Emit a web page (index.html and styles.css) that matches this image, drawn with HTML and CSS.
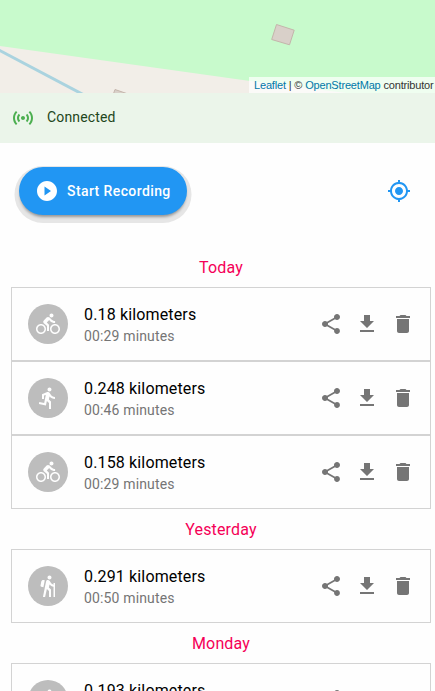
FILE: index.html
```html
<!DOCTYPE html>
<html lang="en">
<head>
<meta charset="utf-8">
<title>Track Recorder</title>
<link rel="stylesheet" href="styles.css">
</head>
<body>
<svg class="sprite" aria-hidden="true">
  <symbol id="bike" viewBox="0 0 24 24"><path d="M15.5 5.5c1.1 0 2-.9 2-2s-.9-2-2-2-2 .9-2 2 .9 2 2 2zM5 12c-2.8 0-5 2.2-5 5s2.2 5 5 5 5-2.2 5-5-2.2-5-5-5zm0 8.5c-1.9 0-3.5-1.6-3.5-3.5s1.6-3.5 3.5-3.5 3.5 1.6 3.5 3.5-1.6 3.5-3.5 3.5zm5.8-10l2.4-2.4.8.8c1.3 1.3 3 2.1 5.1 2.1V9c-1.5 0-2.7-.6-3.6-1.5l-1.9-1.9c-.5-.4-1-.6-1.6-.6s-1.1.2-1.4.6L7.8 8.4c-.4.4-.6.9-.6 1.4 0 .6.2 1.1.6 1.4L11 14v5h2v-6.2l-2.2-2.3zM19 12c-2.8 0-5 2.2-5 5s2.2 5 5 5 5-2.2 5-5-2.2-5-5-5zm0 8.5c-1.9 0-3.5-1.6-3.5-3.5s1.6-3.5 3.5-3.5 3.5 1.6 3.5 3.5-1.6 3.5-3.5 3.5z"/></symbol>
  <symbol id="run" viewBox="0 0 24 24"><path d="M13.49 5.48c1.1 0 2-.9 2-2s-.9-2-2-2-2 .9-2 2 .9 2 2 2zm-3.6 13.9l1-4.4 2.1 2v6h2v-7.5l-2.1-2 .6-3c1.3 1.5 3.3 2.5 5.5 2.5v-2c-1.9 0-3.5-1-4.3-2.4l-1-1.6c-.4-.6-1-1-1.7-1-.3 0-.5.1-.8.1l-5.2 2.2v4.7h2v-3.4l1.8-.7-1.6 8.1-4.9-1-.4 2 7 1.4z"/></symbol>
  <symbol id="hike" viewBox="0 0 24 24"><path d="M13.5 5.5c1.1 0 2-.9 2-2s-.9-2-2-2-2 .9-2 2 .9 2 2 2zM17.5 10.78c-1.23-.37-2.22-1.17-2.8-2.18l-1-1.6c-.41-.65-1.11-1-1.84-1-.78 0-1.59.5-1.78 1.44S7 23 7 23h2.1l1.8-8 2.1 2v6h2v-7.5l-2.1-2 .6-3c1 1.15 2.41 2.01 4 2.34V23H19V9h-1.5v1.78zM7.43 13.13l-2.12-.41c-.54-.11-.9-.63-.79-1.17l.76-3.93c.21-1.08 1.26-1.79 2.34-1.58l1.16.23-1.35 6.86z"/></symbol>
  <symbol id="share" viewBox="0 0 24 24"><path d="M18 16.08c-.76 0-1.44.3-1.96.77L8.91 12.7c.05-.23.09-.46.09-.7s-.04-.47-.09-.7l7.05-4.11c.54.5 1.25.81 2.04.81 1.66 0 3-1.34 3-3s-1.34-3-3-3-3 1.34-3 3c0 .24.04.47.09.7L8.04 9.81C7.5 9.31 6.79 9 6 9c-1.66 0-3 1.34-3 3s1.34 3 3 3c.79 0 1.5-.31 2.04-.81l7.12 4.16c-.05.21-.08.43-.08.65 0 1.61 1.31 2.92 2.92 2.92s2.92-1.31 2.92-2.92-1.31-2.92-2.92-2.92z"/></symbol>
  <symbol id="download" viewBox="0 0 24 24"><path d="M19 9h-4V3H9v6H5l7 7 7-7zM5 18v2h14v-2H5z"/></symbol>
  <symbol id="trash" viewBox="0 0 24 24"><path d="M6 19c0 1.1.9 2 2 2h8c1.1 0 2-.9 2-2V7H6v12zM19 4h-3.5l-1-1h-5l-1 1H5v2h14V4z"/></symbol>
</svg>

<div class="map">
  <svg class="map-tiles" viewBox="0 0 435 93" width="435" height="93">
    <rect width="435" height="93" fill="#f2eee8"/>
    <path d="M0 0H435V104L250 81 0 46z" fill="#c8facc"/>
    <path d="M-4 48.5L84 95" fill="none" stroke="#aad3df" stroke-width="3"/>
    <path d="M276.5 24.5L294.2 30.2 289.5 44.8 271.7 39.5z" fill="#d9d0c9" stroke="#c4b5ab"/>
    <path d="M113 95L115 89.5 131 95z" fill="#d9d0c9" stroke="#c4b5ab"/>
  </svg>
  <div class="attribution"><a>Leaflet</a> | © <a>OpenStreetMap</a> contributor</div>
</div>

<div class="status">
  <svg class="icon" viewBox="0 0 24 24"><path d="M7.76 16.24C6.67 15.16 6 13.66 6 12s.67-3.16 1.76-4.24l1.42 1.42C8.45 9.9 8 10.9 8 12c0 1.1.45 2.1 1.17 2.83l-1.41 1.41zm8.48 0C17.33 15.16 18 13.66 18 12s-.67-3.16-1.76-4.24l-1.42 1.42C15.55 9.9 16 10.9 16 12c0 1.1-.45 2.1-1.17 2.83l1.41 1.41zM12 10c-1.1 0-2 .9-2 2s.9 2 2 2 2-.9 2-2-.9-2-2-2zm8 2c0 2.21-.9 4.21-2.35 5.65l1.42 1.42C20.88 17.26 22 14.76 22 12s-1.12-5.26-2.93-7.07l-1.42 1.42C19.1 7.79 20 9.79 20 12zM6.35 6.35L4.93 4.93C3.12 6.74 2 9.24 2 12s1.12 5.26 2.93 7.07l1.42-1.42C4.9 16.21 4 14.21 4 12s.9-4.21 2.35-5.65z"/></svg>
  <span>Connected</span>
</div>

<div class="controls">
  <button class="record">
    <svg class="icon" viewBox="0 0 24 24"><path d="M12 2C6.48 2 2 6.48 2 12s4.48 10 10 10 10-4.48 10-10S17.52 2 12 2zM9.5 16.500v-9l6.500 4.500-6.500 4.500z"/></svg>
    <span>Start Recording</span>
  </button>
  <svg class="icon locate" viewBox="0 0 24 24"><path d="M12 8c-2.21 0-4 1.79-4 4s1.79 4 4 4 4-1.79 4-4-1.79-4-4-4zm8.94 3c-.46-4.17-3.77-7.48-7.94-7.94V1h-2v2.06C6.83 3.52 3.52 6.83 3.06 11H1v2h2.06c.46 4.17 3.77 7.48 7.94 7.94V23h2v-2.06c4.17-.46 7.48-3.77 7.94-7.94H23v-2h-2.06zM12 19c-3.87 0-7-3.13-7-7s3.13-7 7-7 7 3.13 7 7-3.13 7-7 7z"/></svg>
</div>

<main class="history">
  <h2>Today</h2>
  <article class="track">
    <div class="avatar"><svg class="icon"><use href="#bike"/></svg></div>
    <div class="info"><div class="distance">0.18 kilometers</div><div class="time">00:29 minutes</div></div>
    <div class="actions"><svg class="icon"><use href="#share"/></svg><svg class="icon"><use href="#download"/></svg><svg class="icon"><use href="#trash"/></svg></div>
  </article>
  <article class="track">
    <div class="avatar"><svg class="icon"><use href="#run"/></svg></div>
    <div class="info"><div class="distance">0.248 kilometers</div><div class="time">00:46 minutes</div></div>
    <div class="actions"><svg class="icon"><use href="#share"/></svg><svg class="icon"><use href="#download"/></svg><svg class="icon"><use href="#trash"/></svg></div>
  </article>
  <article class="track">
    <div class="avatar"><svg class="icon"><use href="#bike"/></svg></div>
    <div class="info"><div class="distance">0.158 kilometers</div><div class="time">00:29 minutes</div></div>
    <div class="actions"><svg class="icon"><use href="#share"/></svg><svg class="icon"><use href="#download"/></svg><svg class="icon"><use href="#trash"/></svg></div>
  </article>
  <h2>Yesterday</h2>
  <article class="track">
    <div class="avatar"><svg class="icon"><use href="#hike"/></svg></div>
    <div class="info"><div class="distance">0.291 kilometers</div><div class="time">00:50 minutes</div></div>
    <div class="actions"><svg class="icon"><use href="#share"/></svg><svg class="icon"><use href="#download"/></svg><svg class="icon"><use href="#trash"/></svg></div>
  </article>
  <h2>Monday</h2>
  <article class="track">
    <div class="avatar"><svg class="icon"><use href="#hike"/></svg></div>
    <div class="info"><div class="distance">0.193 kilometers</div></div>
    <div class="actions"><svg class="icon"><use href="#share"/></svg><svg class="icon"><use href="#download"/></svg><svg class="icon"><use href="#trash"/></svg></div>
  </article>
</main>
</body>
</html>
```
FILE: styles.css
```css
* {
  box-sizing: border-box;
}

body {
  margin: 0;
  height: 691px;
  overflow: hidden;
  background: #fefefe;
  color: #000;
  font-family: Roboto, sans-serif;
}

.sprite {
  display: none;
}

.icon {
  display: block;
  flex: none;
  width: 24px;
  height: 24px;
  fill: currentColor;
}

.map {
  position: relative;
  height: 93px;
  overflow: hidden;
}

.map-tiles {
  display: block;
}

.attribution {
  position: absolute;
  left: 249px;
  right: 0;
  bottom: 0;
  height: 16px;
  padding-left: 5px;
  background: rgba(255, 255, 255, 0.7);
  color: #333;
  font: 11px/17px "Liberation Sans", Arial, sans-serif;
  letter-spacing: -0.17px;
  white-space: nowrap;
}

.attribution a {
  color: #0078a8;
}

.status {
  display: flex;
  align-items: center;
  gap: 12px;
  height: 50px;
  padding-left: 11px;
  background: #ebf5ea;
  color: #1e4620;
  font-size: 14px;
  line-height: 20px;
  letter-spacing: 0.15px;
}

.status span {
  margin-top: -2px;
}

.status .icon {
  color: #4caf50;
}

.controls {
  display: flex;
  align-items: center;
  justify-content: space-between;
  height: 104px;
  padding: 0 24px 8px 19px;
}

.record {
  display: flex;
  align-items: center;
  gap: 8px;
  width: 168px;
  height: 48px;
  padding: 0 16px;
  border: 0;
  border-radius: 24px;
  background: #2196f3;
  box-shadow: 0 3px 3px -1px rgba(0, 0, 0, 0.35), 0 3.5px 0 4.5px #e6e6e6;
  color: #fff;
  font: 500 14px/24px Roboto, sans-serif;
  letter-spacing: 0.4px;
  white-space: nowrap;
}

.locate {
  color: #2196f3;
}

.history {
  width: 420px;
  margin-left: 11px;
}

h2 {
  height: 40px;
  margin: 0;
  color: #f50057;
  font-size: 16px;
  font-weight: 400;
  line-height: 42px;
  letter-spacing: 0.15px;
  text-align: center;
}

.track {
  display: flex;
  align-items: flex-start;
  height: 74px;
  padding: 16px 15px 0 16px;
  border: 1px solid #d3d3d3;
}

.avatar {
  display: grid;
  place-items: center;
  width: 40px;
  height: 40px;
  margin-right: 16px;
  border-radius: 50%;
  background: #bdbdbd;
  color: #fefefe;
}

.info {
  flex: 1;
  margin-top: -1px;
}

.distance {
  font-size: 16px;
  line-height: 24px;
  letter-spacing: 0.15px;
}

.time {
  margin-top: -1px;
  color: #757575;
  font-size: 14px;
  line-height: 20px;
  letter-spacing: 0.15px;
}

.actions {
  display: flex;
  gap: 12px;
  margin-top: 8px;
  color: #757575;
}
```
